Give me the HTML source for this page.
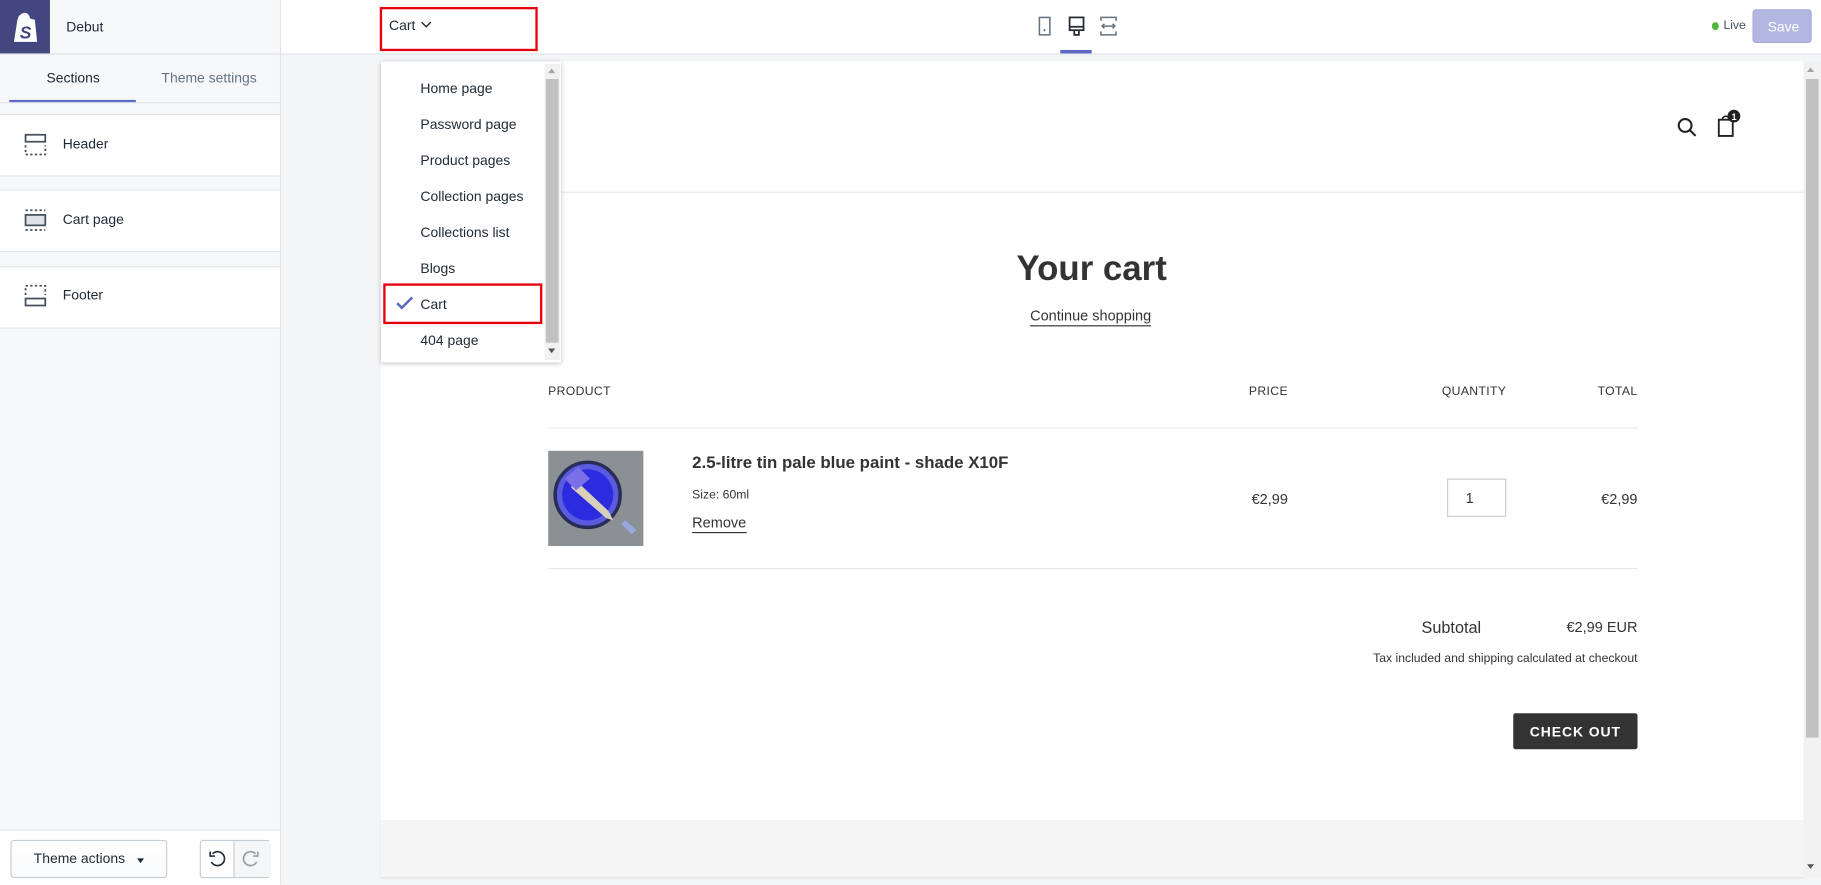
<!DOCTYPE html>
<html><head><meta charset="utf-8"><style>
html,body{margin:0;padding:0;width:1821px;height:884px;overflow:hidden;background:#f4f5f7;font-family:"Liberation Sans",Arial,sans-serif;color:#212b36}
#w{position:absolute;left:0;top:0;width:1568px;height:761px;transform:scale(1.16135,1.1616);transform-origin:0 0;background:#f4f5f7}
.a{position:absolute}
.t{position:absolute;white-space:nowrap}
</style></head><body><div id="w">
<div class="a" style="left:0;top:0;width:241px;height:761px;background:#f7f8fa;border-right:1px solid #dfe3e8"></div>
<div class="a" style="left:0;top:0;width:43px;height:46px;background:#43467f"></div>
<svg class="a" style="left:10px;top:10px" width="24" height="28" viewBox="0 0 24 28"><path d="M5 7 Q6 2 11 1 Q15 1 16 6 L20 7 L22 26 L2 26 Z" fill="#fff"/><text x="7" y="23" font-size="15" font-weight="bold" font-style="italic" fill="#43467f" font-family="Liberation Sans">S</text></svg>
<div class="t" style="left:57px;top:16px;font-size:12px">Debut</div>
<div class="a" style="left:0;top:46px;width:1568px;height:1px;background:#dfe3e8"></div>
<div class="t" style="left:40px;top:60px;font-size:12px">Sections</div>
<div class="t" style="left:139px;top:60px;font-size:12px;color:#637381">Theme settings</div>
<div class="a" style="left:8px;top:86px;width:109px;height:2px;background:#5c6ac4"></div>
<div class="a" style="left:0;top:88px;width:241px;height:1px;background:#dfe3e8"></div>
<div class="a" style="left:0;top:98px;width:241px;height:52px;background:#fff;border-top:1px solid #e4e7ea;border-bottom:1px solid #dfe3e8"></div>
<div class="a" style="left:0;top:163px;width:241px;height:52px;background:#fff;border-top:1px solid #e4e7ea;border-bottom:1px solid #dfe3e8"></div>
<div class="a" style="left:0;top:229px;width:241px;height:52px;background:#fff;border-top:1px solid #e4e7ea;border-bottom:1px solid #dfe3e8"></div>
<svg class="a" style="left:21px;top:115px" width="20" height="20"><rect x="1" y="1" width="17" height="6" fill="none" stroke="#454f5b" stroke-width="1.5"/><path d="M1 10v8h17v-8" fill="none" stroke="#454f5b" stroke-width="1.5" stroke-dasharray="2 2"/></svg>
<div class="t" style="left:54px;top:117px;font-size:12px">Header</div>
<svg class="a" style="left:21px;top:180px" width="20" height="20"><path d="M1 1h17M1 18h17" stroke="#454f5b" stroke-width="1.5" stroke-dasharray="2 2"/><rect x="1" y="5" width="17" height="9" fill="#dfe3e8" stroke="#454f5b" stroke-width="1.5"/></svg>
<div class="t" style="left:54px;top:182px;font-size:12px">Cart page</div>
<svg class="a" style="left:21px;top:245px" width="20" height="20"><path d="M1 9v-8h17v8" fill="none" stroke="#454f5b" stroke-width="1.5" stroke-dasharray="2 2"/><rect x="1" y="12" width="17" height="6" fill="none" stroke="#454f5b" stroke-width="1.5"/></svg>
<div class="t" style="left:54px;top:247px;font-size:12px">Footer</div>
<div class="a" style="left:0;top:714px;width:241px;height:47px;background:#fff;border-top:1px solid #dfe3e8"></div>
<div class="a" style="left:9px;top:723px;width:133px;height:31px;border:1px solid #c4cdd5;border-radius:3px;background:linear-gradient(#fff,#f9fafb)"></div>
<div class="t" style="left:29px;top:732px;font-size:12px">Theme actions</div>
<div class="a" style="left:118px;top:739px;border:3.5px solid transparent;border-top:4px solid #212b36"></div>
<div class="a" style="left:172px;top:723px;width:59px;height:31px;border:1px solid #c4cdd5;border-radius:3px;background:#fff"></div>
<div class="a" style="left:201px;top:724px;width:31px;height:31px;background:#f4f6f8;border-left:1px solid #c4cdd5"></div>
<svg class="a" style="left:179px;top:731px" width="16" height="16"><path d="M4 4a6 6 0 1 1-1 7" fill="none" stroke="#212b36" stroke-width="1.4"/><path d="M2 2v4h4" fill="none" stroke="#212b36" stroke-width="1.4"/></svg>
<svg class="a" style="left:208px;top:731px" width="16" height="16"><path d="M12 4a6 6 0 1 0 1 7" fill="none" stroke="#919eab" stroke-width="1.4"/><path d="M14 2v4h-4" fill="none" stroke="#919eab" stroke-width="1.4"/></svg>
<div class="a" style="left:242px;top:0;width:1326px;height:46px;background:#fff"></div>
<div class="t" style="left:335px;top:15px;font-size:12px">Cart</div>
<svg class="a" style="left:362px;top:17px" width="10" height="8"><path d="M1 2l4 4 4-4" fill="none" stroke="#212b36" stroke-width="1.2"/></svg>
<div class="a" style="left:327px;top:6px;width:132px;height:34px;border:2px solid #e8000b"></div>
<svg class="a" style="left:894px;top:14px" width="70" height="18"><rect x="1" y="1" width="9" height="15" fill="none" stroke="#637381" stroke-width="1.3"/><circle cx="5.5" cy="12" r="0.9" fill="#637381"/><rect x="27" y="1" width="12" height="11" fill="none" stroke="#212b36" stroke-width="1.5"/><path d="M27 9h12M31 12v4h4v-4" fill="none" stroke="#212b36" stroke-width="1.5"/><path d="M54 4v-3h13v3M54 13v3h13v-3M55 8.5h11M57 6.5l-2 2 2 2M64 6.5l2 2-2 2" fill="none" stroke="#637381" stroke-width="1.3"/></svg>
<div class="a" style="left:913px;top:43px;width:27px;height:3px;background:#5c6ac4"></div>
<div class="a" style="left:1474px;top:19px;width:6px;height:7px;border-radius:50%;background:#50b83c"></div>
<div class="t" style="left:1484px;top:16px;font-size:10.5px;color:#454f5b">Live</div>
<div class="a" style="left:1509px;top:8px;width:51px;height:29px;background:#b3b7e2;border-radius:3px;border:1px solid #a4a9db;box-sizing:border-box"></div>
<div class="t" style="left:1522px;top:16px;font-size:12px;color:#fff">Save</div>
<div class="a" style="left:328px;top:53px;width:1225px;height:653px;background:#fff"></div>
<div class="a" style="left:328px;top:706px;width:1225px;height:49px;background:#f5f5f5;box-shadow:0 1px 2px rgba(0,0,0,.1)"></div>
<div class="a" style="left:1553px;top:53px;width:15px;height:702px;background:#f1f1f1"></div>
<div class="a" style="left:1555px;top:68px;width:11px;height:567px;background:#c1c1c1"></div>
<div class="a" style="left:1556px;top:58px;border:3.5px solid transparent;border-bottom:4px solid #a3a3a3;border-top:0"></div>
<div class="a" style="left:1556px;top:744px;border:3.5px solid transparent;border-top:4px solid #505050;border-bottom:0"></div>
<div class="a" style="left:328px;top:165px;width:1225px;height:1px;background:#e8e9eb"></div>
<svg class="a" style="left:1443px;top:100px" width="20" height="20"><circle cx="8" cy="8" r="5.5" fill="none" stroke="#222" stroke-width="1.8"/><path d="M12 12l5 5" stroke="#222" stroke-width="1.8"/></svg>
<svg class="a" style="left:1477px;top:94px" width="26" height="26"><path d="M3 9h12v14H3z" fill="none" stroke="#222" stroke-width="1.6"/><path d="M6 9a3 3 0 0 1 6 0" fill="none" stroke="#222" stroke-width="1.4"/><circle cx="16" cy="6" r="5.5" fill="#222"/><text x="14" y="9.5" font-size="8" font-weight="bold" fill="#fff" font-family="Liberation Sans">1</text></svg>
<div class="t" style="left:0;width:1880px;text-align:center;top:215px;font-size:30px;font-weight:bold;color:#333">Your cart</div>
<div class="t" style="left:887px;top:265px;font-size:12.5px;color:#333;border-bottom:1px solid #333;line-height:15px">Continue shopping</div>
<div class="t" style="left:472px;top:331px;font-size:10.5px;color:#333;letter-spacing:.3px">PRODUCT</div>
<div class="t" style="left:1009px;width:100px;text-align:right;top:331px;font-size:10.5px;color:#333;letter-spacing:.3px">PRICE</div>
<div class="t" style="left:1197px;width:100px;text-align:right;top:331px;font-size:10.5px;color:#333;letter-spacing:.3px">QUANTITY</div>
<div class="t" style="left:1310px;width:100px;text-align:right;top:331px;font-size:10.5px;color:#333;letter-spacing:.3px">TOTAL</div>
<div class="a" style="left:472px;top:368px;width:938px;height:1px;background:#e8e9eb"></div>
<svg class="a" style="left:472px;top:388px" width="82" height="82"><rect width="82" height="82" fill="#7d8287"/><rect width="82" height="82" fill="#9a9ea3" opacity=".5"/><circle cx="34" cy="38" r="28" fill="#5a5ce0" stroke="#2a2c58" stroke-width="3"/><circle cx="34" cy="38" r="22" fill="#2d2be0"/><path d="M20 22l32 30 4 8-6-2-30-26z" fill="#d8d0b8"/><path d="M14 24l12-10 10 10-12 10z" fill="#7b6fe8"/><path d="M66 60l10 8-4 4-9-9z" fill="#9aa8e0"/></svg>
<div class="t" style="left:596px;top:391px;font-size:14.5px;font-weight:bold;color:#333">2.5-litre tin pale blue paint - shade X10F</div>
<div class="t" style="left:596px;top:420px;font-size:10.5px;color:#333">Size: 60ml</div>
<div class="t" style="left:596px;top:443px;font-size:12.5px;color:#333;border-bottom:1px solid #333;line-height:15px">Remove</div>
<div class="t" style="left:1009px;width:100px;text-align:right;top:423px;font-size:12.5px;color:#333">€2,99</div>
<div class="a" style="left:1246px;top:412px;width:51px;height:33px;border:1px solid #ccc;box-sizing:border-box"></div>
<div class="t" style="left:1262px;top:422px;font-size:12.5px;color:#333">1</div>
<div class="t" style="left:1310px;width:100px;text-align:right;top:423px;font-size:12.5px;color:#333">€2,99</div>
<div class="a" style="left:472px;top:489px;width:938px;height:1px;background:#e8e9eb"></div>
<div class="t" style="left:1224px;top:532px;font-size:14px;color:#333">Subtotal</div>
<div class="t" style="left:1310px;width:100px;text-align:right;top:533px;font-size:12.5px;color:#333">€2,99 EUR</div>
<div class="t" style="left:1010px;width:400px;text-align:right;top:561px;font-size:10.5px;color:#333">Tax included and shipping calculated at checkout</div>
<div class="a" style="left:1303px;top:614px;width:107px;height:31px;background:#333;border-radius:2px"></div>
<div class="t" style="left:1303px;width:107px;text-align:center;top:623px;font-size:12px;font-weight:bold;color:#fff;letter-spacing:.8px">CHECK OUT</div>
<div class="a" style="left:328px;top:53px;width:155px;height:259px;background:#fff;box-shadow:0 1px 4px rgba(0,0,0,.25)"></div>
<div class="a" style="left:469px;top:55px;width:13px;height:255px;background:#f1f1f1"></div>
<div class="a" style="left:470px;top:68px;width:11px;height:227px;background:#c1c1c1"></div>
<div class="a" style="left:472px;top:59px;border:3.5px solid transparent;border-bottom:4px solid #a3a3a3;border-top:0"></div>
<div class="a" style="left:472px;top:300px;border:3.5px solid transparent;border-top:4px solid #505050;border-bottom:0"></div>
<div class="t" style="left:362px;top:69px;font-size:12px">Home page</div>
<div class="t" style="left:362px;top:100px;font-size:12px">Password page</div>
<div class="t" style="left:362px;top:131px;font-size:12px">Product pages</div>
<div class="t" style="left:362px;top:162px;font-size:12px">Collection pages</div>
<div class="t" style="left:362px;top:193px;font-size:12px">Collections list</div>
<div class="t" style="left:362px;top:224px;font-size:12px">Blogs</div>
<div class="t" style="left:362px;top:255px;font-size:12px">Cart</div>
<div class="t" style="left:362px;top:286px;font-size:12px">404 page</div>
<svg class="a" style="left:341px;top:254px" width="16" height="14"><path d="M1 7l4 4 9-9" fill="none" stroke="#5c6ac4" stroke-width="2.2"/></svg>
<div class="a" style="left:330px;top:244px;width:133px;height:31px;border:2px solid #e8000b"></div>
</div></body></html>
